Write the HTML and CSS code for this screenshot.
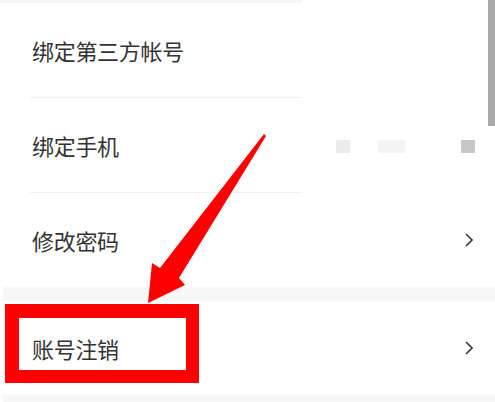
FILE: index.html
```html
<!DOCTYPE html>
<html lang="zh-CN">
<head>
  <meta charset="UTF-8">
  <title>账号设置</title>
  <link rel="stylesheet" href="styles.css">
</head>
<body>

  <!-- SETTINGS SCREEN -->
  <div class="screen">
    <div class="top-strip"></div>

    <div class="row">
      <span class="label">绑定第三方帐号</span>
    </div>
    <div class="divider"></div>

    <div class="row">
      <span class="label">绑定手机</span>
      <div class="masked">
        <span class="blur blur-a"></span>
        <span class="blur blur-b"></span>
        <span class="blur blur-c"></span>
      </div>
    </div>
    <div class="divider"></div>

    <div class="row">
      <span class="label">修改密码</span>
      <svg class="chevron" viewBox="0 0 8 14" width="8" height="14">
        <path d="M1 1 L7 7 L1 13" fill="none" stroke="#3a3a3a" stroke-width="1.6"/>
      </svg>
    </div>

    <div class="section-gap"></div>

    <div class="row">
      <span class="label">账号注销</span>
      <svg class="chevron" viewBox="0 0 8 14" width="8" height="14">
        <path d="M1 1 L7 7 L1 13" fill="none" stroke="#3a3a3a" stroke-width="1.6"/>
      </svg>
    </div>

    <div class="section-gap bottom"></div>

    <!-- ANNOTATIONS -->
    <div class="scrollbar"></div>
    <div class="highlight-box"></div>
    <svg class="arrow" viewBox="0 0 495 402" width="495" height="402">
      <polygon points="264,134 266,136 179,278 185,285 148,303 152,263 160,268" fill="#ff0000"/>
    </svg>
  </div>

</body>
</html>
```

FILE: styles.css
```css
body {
  margin: 0;
  padding: 0;
  background-color: #fff;
  font-family: "Noto Sans CJK SC", "Noto Sans", sans-serif;
}

.screen {
  position: relative;
  width: 495px;
  height: 402px;
  overflow: hidden;
  background-color: #fff;
}

.top-strip {
  width: 302px;
  height: 3px;
  background-color: #f6f6f6;
}

.row {
  display: flex;
  align-items: center;
  height: 94px;
  padding: 0 22px 0 32px;
  background-color: #fff;
}

.label {
  font-size: 22px;
  color: #333;
  letter-spacing: -0.3px;
}

.divider {
  width: 272px;
  height: 1px;
  margin-left: 30px;
  background-color: #f0f0f0;
}

.masked {
  display: flex;
  margin-left: auto;
  margin-right: -2px;
  margin-top: 3px;
}

.blur {
  display: block;
  height: 13px;
}

.blur-a {
  width: 14px;
  background-color: #ebebeb;
}

.blur-b {
  width: 27px;
  margin-left: 28px;
  background-color: #f4f4f4;
}

.blur-c {
  width: 14px;
  margin-left: 56px;
  background-color: #c7c7c7;
}

.chevron {
  display: block;
  margin-left: auto;
}

.section-gap {
  height: 14px;
  margin-left: 3px;
  background-color: #f7f7f7;
}

.section-gap.bottom {
  height: 7px;
}

.scrollbar {
  position: absolute;
  top: 0;
  right: 0;
  width: 7px;
  height: 126px;
  background-color: #a9a9a9;
}

.highlight-box {
  position: absolute;
  left: 5px;
  top: 304px;
  width: 167px;
  height: 52px;
  border: 14px solid #ff0000;
  border-right-width: 13px;
  border-bottom-width: 13px;
}

.arrow {
  position: absolute;
  left: 0;
  top: 0;
}
```
